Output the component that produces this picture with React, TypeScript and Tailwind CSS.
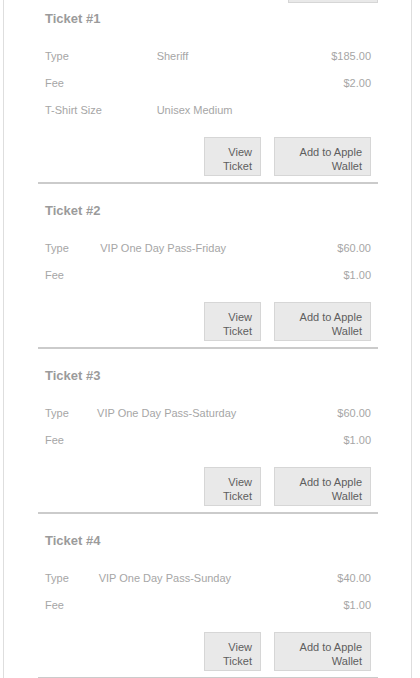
import React from 'react';

interface Ticket {
  id: number;
  rows: [string, string, string][];
}

const tickets: Ticket[] = [
  {
    id: 1,
    rows: [
      ['Type', 'Sheriff', '$185.00'],
      ['Fee', '', '$2.00'],
      ['T-Shirt Size', 'Unisex Medium', ''],
    ],
  },
  {
    id: 2,
    rows: [
      ['Type', 'VIP One Day Pass-Friday', '$60.00'],
      ['Fee', '', '$1.00'],
    ],
  },
  {
    id: 3,
    rows: [
      ['Type', 'VIP One Day Pass-Saturday', '$60.00'],
      ['Fee', '', '$1.00'],
    ],
  },
  {
    id: 4,
    rows: [
      ['Type', 'VIP One Day Pass-Sunday', '$40.00'],
      ['Fee', '', '$1.00'],
    ],
  },
];

function TicketBlock({ ticket, first }: { ticket: Ticket; first: boolean }) {
  return (
    <section className={first ? 'pt-[8px]' : 'pt-[19px]'}>
      <h3 className="pl-[7px] text-[13px] leading-[16px] font-bold text-[#9b9b9b]">
        Ticket #{ticket.id}
      </h3>

      <div className="mt-4 px-[1px]">
        <table className="w-full text-[11px] text-[#a6a6a6]">
          <tbody>
            {ticket.rows.map(([label, value, price]) => (
              <tr key={label} className="h-[27px]">
                <td className="px-[6px] whitespace-nowrap">{label}</td>
                <td className="px-[6px] whitespace-nowrap">{value}</td>
                <td className="px-[6px] whitespace-nowrap text-right">{price}</td>
              </tr>
            ))}
          </tbody>
        </table>
      </div>

      {/* Actions */}
      <div className="mt-[13px] flex justify-end gap-[13px] pr-[7px]">
        <button className="flex h-[39px] w-[57px] flex-col items-end border border-[#d6d6d6] bg-[#e9e9e9] px-2 pt-[7px] text-right text-[11px] leading-[14px] text-[#5e5e5e]">
          View Ticket
        </button>
        <button className="flex h-[39px] w-[97px] flex-col items-end border border-[#d6d6d6] bg-[#e9e9e9] px-2 pt-[7px] text-right text-[11px] leading-[14px] text-[#5e5e5e]">
          Add to Apple Wallet
        </button>
      </div>

      <div className="mt-[6px] h-[2px] bg-[#cbcbcb]" />
    </section>
  );
}

export default function App() {
  return (
    <div className="h-screen overflow-hidden bg-white font-['Liberation_Sans',Arial,sans-serif]">
      <div className="ml-[3px] h-full w-[409px] border-x border-[#dedede]">
        <div className="pl-[34px] pr-[33px]">
          {/* bottom of the previous section's button, scrolled off */}
          <div className="ml-auto h-[3px] w-[90px] border-x border-b border-[#d6d6d6] bg-[#e9e9e9]" />

          {tickets.map((t, i) => (
            <TicketBlock key={t.id} ticket={t} first={i === 0} />
          ))}
        </div>
      </div>
    </div>
  );
}
